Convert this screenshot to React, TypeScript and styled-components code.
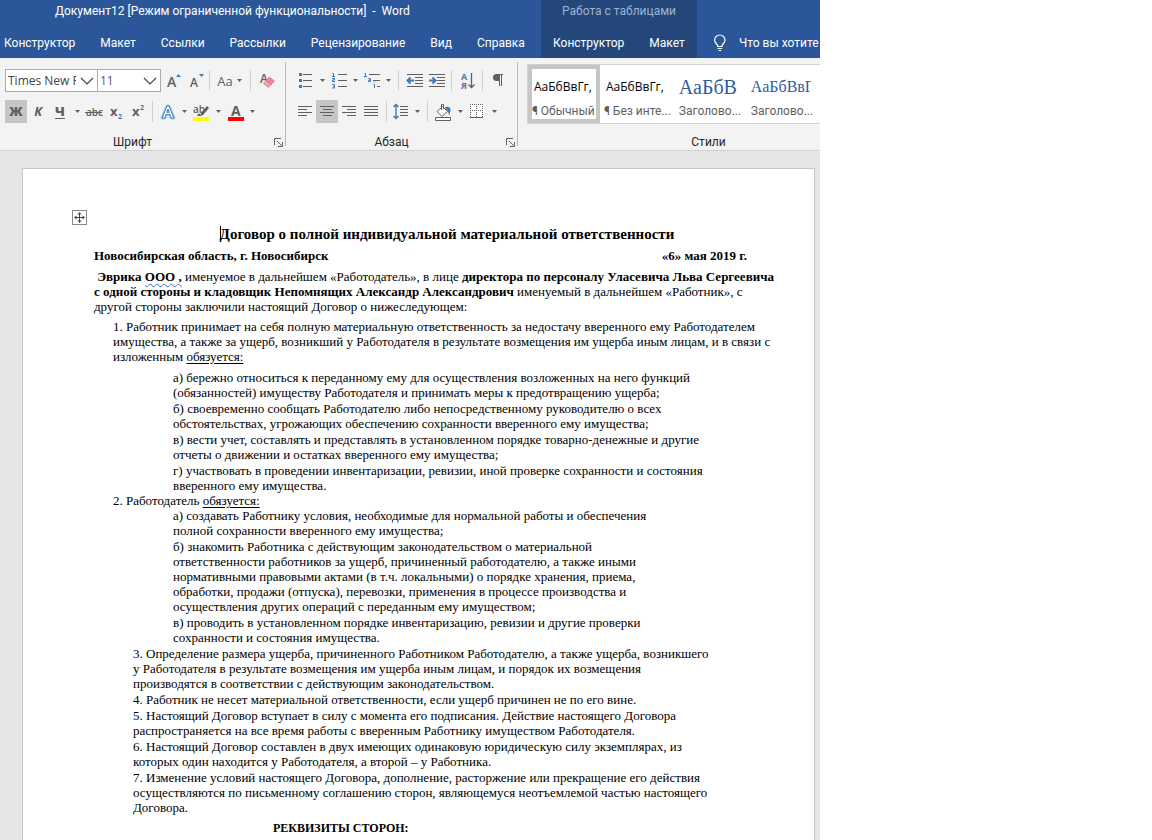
import React from 'react';
import styled, { createGlobalStyle, css } from 'styled-components';

const UI = 'Roboto, "Noto Sans", sans-serif';
const HUMANIST = '"Open Sans", "Noto Sans", sans-serif';
const SERIF = '"Liberation Serif", serif';
const GRAY = '#5f5f5f';
const BLUE = '#3e7ab5';

const GlobalStyle = createGlobalStyle`
  *, *::before, *::after { box-sizing: border-box; }
  html, body, #root { height: 100%; }
  body { margin: 0; background: #fff; overflow: hidden; }
  button, select { font: inherit; color: inherit; margin: 0; border: 0; background: none; }
  svg { overflow: visible; flex: none; }
`;

const AppWindow = styled.div`
  display: flex;
  flex-direction: column;
  width: 100%;
  max-width: 820px;
  height: 100vh;
  overflow: hidden;
  font-family: ${UI};
  font-size: 12px;
`;

/* ---------- title bar and tabs ---------- */

const Header = styled.header`
  display: grid;
  grid-template-columns: 541px 156px minmax(0, 1fr);
  background: #2b579a;
  color: #fff;
  height: 58px;
`;

const HeaderPart = styled.div<{ $context?: boolean }>`
  display: grid;
  grid-template-rows: 28px 30px;
  min-width: 0;
  overflow: hidden;
  background: ${(p) => (p.$context ? '#24477b' : 'transparent')};
`;

const WindowTitle = styled.h1`
  margin: 0;
  padding: 2px 0 0 55px;
  font-size: 12px;
  font-weight: 400;
  line-height: 18px;
  white-space: pre;
`;

const ContextTitle = styled.div`
  padding-top: 2px;
  line-height: 18px;
  text-align: center;
  color: #9fb3d1;
`;

const TabBar = styled.nav<{ $inset?: number }>`
  display: flex;
  gap: 25px;
  padding-left: ${(p) => p.$inset ?? 4}px;
`;

const Tab = styled.button`
  padding: 0;
  height: 30px;
  line-height: 30px;
  white-space: nowrap;
  cursor: pointer;
`;

const TellMe = styled.button`
  grid-row: 2;
  display: flex;
  align-items: center;
  gap: 12px;
  padding: 0 0 0 16px;
  white-space: nowrap;
  cursor: pointer;
`;

/* ---------- ribbon ---------- */

const Ribbon = styled.div`
  display: flex;
  height: 93px;
  flex: none;
  background: #f3f3f3;
  border-bottom: 1px solid #d2d2d2;
  color: ${GRAY};
`;

const Group = styled.section<{ $width?: number }>`
  position: relative;
  display: flex;
  flex-direction: column;
  ${(p) => (p.$width ? css`flex: 0 0 ${p.$width}px;` : css`flex: 1; min-width: 0;`)}

  &:not(:last-child)::after {
    content: '';
    position: absolute;
    right: 0;
    top: 4px;
    bottom: 4px;
    width: 1px;
    background: #b5b5b5;
  }
`;

const ToolRow = styled.div<{ $inset: number }>`
  display: flex;
  align-items: center;
  height: 31px;
  padding-left: ${(p) => p.$inset}px;
`;

const Tools = styled.div`
  padding-top: 7px;
  height: 76px;
`;

const GroupFooter = styled.footer<{ $inset?: number }>`
  display: flex;
  align-items: center;
  gap: 9px;
  height: 16px;
  padding: 0 3px 0 ${(p) => p.$inset ?? 0}px;
  color: #262626;
`;

const GroupName = styled.h2`
  flex: 1;
  margin: 0;
  font-size: 12px;
  font-weight: 400;
  line-height: 16px;
  text-align: center;
`;

const Tool = styled.button<{ $width?: number; $active?: boolean }>`
  display: flex;
  align-items: center;
  justify-content: center;
  flex: none;
  width: ${(p) => p.$width ?? 22}px;
  height: 23px;
  padding: 0;
  background: ${(p) => (p.$active ? '#c6c6c6' : 'transparent')};
  cursor: pointer;
`;

const Separator = styled.span<{ $gap?: number }>`
  flex: none;
  width: 1px;
  height: 21px;
  margin: 0 ${(p) => p.$gap ?? 3}px;
  background: #d0d0d0;
`;

const ComboBox = styled.label<{ $width: number }>`
  position: relative;
  display: block;
  width: ${(p) => p.$width}px;
  height: 23px;
  background: #fff;
  border: 1px solid #ababab;
  font-family: ${HUMANIST};

  & + & { margin-left: -1px; }

  svg { position: absolute; right: 3px; top: 7px; pointer-events: none; }
`;

const ComboSelect = styled.select<{ $color: string }>`
  appearance: none;
  width: 100%;
  height: 21px;
  padding: 0 21px 0 2px;
  line-height: 19px;
  overflow: hidden;
  text-overflow: clip;
  color: ${(p) => p.$color};
  outline: 0;
`;

const Glyph = styled.span<{ $italic?: boolean; $underline?: boolean }>`
  font-family: ${HUMANIST};
  font-size: 13px;
  font-weight: ${(p) => (p.$italic ? 700 : 800)};
  line-height: 13px;
  font-style: ${(p) => (p.$italic ? 'italic' : 'normal')};
  border-bottom: ${(p) => (p.$underline ? `1px solid ${GRAY}` : '0')};
`;

const CaseGlyph = styled.span`
  font-family: ${HUMANIST};
  font-size: 13px;
  margin-right: 4px;
`;

/* ---------- style gallery ---------- */

const GalleryArea = styled.div`
  height: 76px;
  padding: 6px 0 0 9px;
`;

const Gallery = styled.div`
  display: flex;
  height: 60px;
  background: #fff;
  border: 1px solid #d2d2d2;
  border-right: 0;
  overflow: hidden;
`;

const StyleCard = styled.button<{ $active?: boolean }>`
  display: flex;
  flex-direction: column;
  flex: 0 0 72px;
  height: 58px;
  padding: 10px 4px 0;
  box-shadow: ${(p) => (p.$active ? 'inset 0 0 0 4px #c6c6c6' : 'none')};
  text-align: left;
  cursor: pointer;
`;

const Sample = styled.span<{ $size?: number }>`
  width: 60px;
  height: 24px;
  overflow: hidden;
  white-space: nowrap;
  line-height: 24px;
  ${(p) =>
    p.$size
      ? css`font-family: ${SERIF}; font-size: ${p.$size}px; color: #2f5f9b;`
      : css`margin-left: 2px; font-family: ${HUMANIST}; font-size: 12px; color: #000;`}
`;

const StyleName = styled.span`
  line-height: 24px;
  white-space: nowrap;
  color: ${GRAY};
`;

/* ---------- document ---------- */

const Workspace = styled.main`
  display: flex;
  flex: 1;
  min-height: 0;
  padding: 17px 5px 0 22px;
  background: #e6e6e6;
  overflow: hidden;
`;

const Page = styled.article`
  position: relative;
  flex: 1;
  padding: 57px 14px 0 71px;
  background: #fff;
  border: 1px solid #c6c6c6;
  border-bottom: 0;
  font-family: ${SERIF};
  font-size: 13px;
  line-height: 15px;
  color: #000;
  white-space: nowrap;
`;

const TableHandle = styled.button`
  position: absolute;
  left: 49px;
  top: 41px;
  width: 15px;
  height: 15px;
  padding: 0;
  border: 1px solid #8a8a8a;
  background: #fff;

  svg { display: block; }
`;

const DocTitle = styled.h2`
  margin: 0 0 5px;
  font-size: 15px;
  line-height: 17px;
  text-align: center;
`;

const TextCursor = styled.span`
  display: inline-block;
  width: 1px;
  height: 16px;
  margin-right: -1px;
  background: #000;
  vertical-align: -3px;
`;

const PlaceAndDate = styled.div`
  display: flex;
  justify-content: space-between;
  margin-bottom: 6px;
  padding-right: 53px;
  font-weight: 700;
`;

const Paragraph = styled.p<{ $indent?: number; $after?: number }>`
  margin: 0 0 ${(p) => p.$after ?? 0}px;
  padding-left: ${(p) => p.$indent ?? 0}px;
`;

const Clauses = styled.div<{ $indent: number; $after?: number }>`
  display: flex;
  flex-direction: column;
  gap: 1px;
  padding-left: ${(p) => p.$indent}px;
  margin-bottom: ${(p) => p.$after ?? 0}px;
`;

const Flagged = styled.span`
  text-decoration: underline wavy #3b6fd8 1px;
  text-underline-offset: 2px;
`;

const Underlined = styled.u`
  text-underline-offset: 2px;
`;

const Requisites = styled.h3`
  margin: 0;
  padding-left: 179px;
  font-size: 12px;
`;

/* ---------- icons ---------- */

const Caret = () => (
  <svg width="5" height="3" viewBox="0 0 5 3"><path d="M0 0h5L2.500 3z" fill={GRAY} /></svg>
);

const Chevron = () => (
  <svg width="14" height="8" viewBox="0 0 14 8"><path d="M1 1l6 6 6-6" fill="none" stroke="#444" strokeWidth="1.2" /></svg>
);

const CaretTool = ({ label, width = 12 }: { label: string; width?: number }) => (
  <Tool $width={width} aria-label={label}><Caret /></Tool>
);

const Lines = ({ rows }: { rows: [number, number][] }) => (
  <svg width="15" height="13" viewBox="0 0 15 13" stroke={GRAY}>
    {rows.map(([x, w], i) => (
      <path key={i} d={`M${x} ${i * 3 + 1.5}h${w}`} />
    ))}
  </svg>
);

const Bulb = () => (
  <svg width="14" height="18" viewBox="0 0 14 18" fill="none" stroke="#fff" strokeWidth="1.2">
    <path d="M4.500 12.500V11C3 9.700 1.600 8.500 1.600 6.200A5.200 5.200 0 0 1 12 6.200c0 2.300-1.400 3.500-2.900 4.800v1.500zM4.500 14.500h4.600M5.500 16.500h2.600" />
  </svg>
);

const FontSizeIcon = ({ up }: { up?: boolean }) => (
  <svg width="16" height="18" viewBox="0 0 16 18">
    <text x="2" y="15" fontFamily={HUMANIST} fontSize={up ? 14 : 12} fontWeight="600" fill={GRAY}>A</text>
    <path d={up ? 'M11 5l2.500-3L16 5z' : 'M11 2h5l-2.500 3z'} fill={BLUE} />
  </svg>
);

const EraserIcon = () => (
  <svg width="16" height="18" viewBox="0 0 16 18">
    <text x="1" y="11" fontFamily={HUMANIST} fontSize="12" fontWeight="600" fill={GRAY}>A</text>
    <path d="M10.500 4.500L16 9l-6.500 7L4 11.500z" fill="#e8879a" />
    <path d="M5.700 9.800l5.400 4.500" stroke="#f9dfe4" />
  </svg>
);

const StrikeIcon = () => (
  <svg width="18" height="14" viewBox="0 0 18 14">
    <text x="1" y="11" fontFamily={HUMANIST} fontSize="10" fontWeight="600" fill={GRAY}>abc</text>
    <path d="M0 7.500h17" stroke={GRAY} />
  </svg>
);

const ScriptIcon = ({ sup }: { sup?: boolean }) => (
  <svg width="14" height="18" viewBox="0 0 14 18">
    <text x="1" y="13" fontFamily={HUMANIST} fontSize="13" fontWeight="700" fill={GRAY}>x</text>
    <text x="9" y={sup ? 7 : 16} fontFamily={HUMANIST} fontSize="7" fontWeight="700" fill={BLUE}>2</text>
  </svg>
);

const EffectIcon = () => (
  <svg width="14" height="18" viewBox="1 0 14 18">
    <path d="M3 15L8 3h2l5 12h-2.800l-1.200-3.500H7L5.800 15zM7.800 9.300h2.400L9 6z" fill="#fff" stroke="#a9cbeb" strokeWidth="3" strokeLinejoin="round" />
    <path d="M3 15L8 3h2l5 12h-2.800l-1.200-3.500H7L5.800 15zM7.800 9.300h2.400L9 6z" fill="#fff" stroke={BLUE} />
  </svg>
);

const HighlightIcon = () => (
  <svg width="18" height="18" viewBox="0 0 18 18">
    <text x="1" y="10" fontFamily={HUMANIST} fontSize="10" fontWeight="600" fill={GRAY}>ab</text>
    <path d="M15 3l2 2-6 7-3 1 1-3z" fill={GRAY} />
    <path d="M7 10l2 3H5z" fill={GRAY} />
    <path d="M1 14h16v4H1z" fill="#ff0" />
  </svg>
);

const FontColorIcon = () => (
  <svg width="18" height="18" viewBox="0 0 18 18">
    <text x="5" y="13" fontFamily={HUMANIST} fontSize="14" fontWeight="700" fill={GRAY}>A</text>
    <path d="M2 14h16v4H2z" fill="#f00" />
  </svg>
);

const BulletsIcon = () => (
  <svg width="15" height="17" viewBox="0 0 15 17">
    <path d="M5 2.500h9M5 8.500h9M5 14.500h9" stroke={GRAY} />
    <path d="M1 1h3v3H1zM1 7h3v3H1zM1 13h3v3H1z" fill={BLUE} />
  </svg>
);

const NumberingIcon = () => (
  <svg width="15" height="17" viewBox="0 0 15 17">
    <path d="M6 2.500h9M6 8.500h9M6 14.500h9" stroke={GRAY} />
    <path d="M.5 1.500h1V4M0 4.500h3M0 6.500h2.500v1.500H.5v1.500H3M0 12.500h2.500v3.500H0M1 14.300h1.500" fill="none" stroke={BLUE} />
  </svg>
);

const MultilevelIcon = () => (
  <svg width="17" height="17" viewBox="0 0 17 17">
    <path d="M5 2.500h11M9 8.500h7M13 14.500h3" stroke={GRAY} />
    <path d="M.5 1.500h1V4M0 4.500h3M4.500 6.500h2V9.500h-2V8H6M9.500 12.500h1V16M9.500 10h1" fill="none" stroke={BLUE} />
  </svg>
);

const IndentIcon = ({ out }: { out?: boolean }) => (
  <svg width="17" height="15" viewBox="0 0 17 15">
    <path d="M1 1.500h16M9 4.500h8M9 7.500h8M9 10.500h8M1 13.500h16" stroke={GRAY} />
    <path d={out ? 'M8 7.500H2M4.500 4.500l-3 3 3 3' : 'M1 7.500h6M4.500 4.500l3 3-3 3'} fill="none" stroke={BLUE} strokeWidth="2" />
  </svg>
);

const SortIcon = () => (
  <svg width="15" height="20" viewBox="0 0 15 20">
    <text x="1" y="9" fontFamily={HUMANIST} fontSize="9" fontWeight="700" fill={BLUE}>А</text>
    <text x="1" y="18" fontFamily={HUMANIST} fontSize="9" fontWeight="700" fill="#8a54ad">Я</text>
    <path d="M11.500 2v14M8.500 13.500l3 3 3-3" fill="none" stroke={GRAY} strokeWidth="1.300" />
  </svg>
);

const PilcrowIcon = () => (
  <svg width="12" height="15" viewBox="0 0 12 15">
    <path d="M6 1.500h5M7.500 1v12M9.500 1v12" stroke={GRAY} fill="none" />
    <path d="M7 1v7H4.500a3.500 3.500 0 0 1 0-7z" fill={GRAY} />
  </svg>
);

const SpacingIcon = () => (
  <svg width="16" height="17" viewBox="0 0 16 17">
    <path d="M7 3.500h8M7 6.500h8M7 9.500h8M7 12.500h8" stroke={GRAY} />
    <path d="M3 1.500v14M.5 4L3 1.500 5.500 4M.5 13L3 15.500 5.500 13" fill="none" stroke={BLUE} strokeWidth="1.400" />
  </svg>
);

const BucketIcon = () => (
  <svg width="18" height="18" viewBox="0 0 18 18">
    <path d="M11 4c4-1 6 1 5.500 4L15 12.500c-.5-3-1-4.500-3.500-7z" fill={BLUE} />
    <path d="M3 8.500l5.500-5 5 5-5.500 5z" fill="#fff" stroke={GRAY} />
    <path d="M7.500 7V1.500h2V6" fill="none" stroke={GRAY} />
    <path d="M1.500 14.500h15v3h-15z" fill="#fff" stroke={GRAY} />
  </svg>
);

const BordersIcon = () => (
  <svg width="14" height="15" viewBox="0 0 14 15">
    <path d="M0 0h14v14H0z" fill="#fff" />
    <path d="M0 .5h13M0 6.500h13M.5 0v13M6.500 0v13M12.500 0v13" stroke={GRAY} strokeDasharray="1 1" />
    <path d="M0 13.500h13" stroke={GRAY} />
  </svg>
);

const LauncherIcon = () => (
  <svg width="9" height="9" viewBox="0 0 9 9" fill="none" stroke={GRAY}>
    <path d="M.5 7V.5H7M3 3l4.500 4.500M8.500 4v4.500H4" />
  </svg>
);

const MoveIcon = () => (
  <svg width="13" height="13" viewBox="0 0 13 13">
    <path d="M6.500 2v9M2 6.500h9" stroke="#444" />
    <path d="M4.500 3.500h4l-2-2.500zM4.500 9.500h4l-2 2.500zM3.500 4.500v4L1 6.500zM9.500 4.500v4l2.500-2z" fill="#444" />
  </svg>
);

/* ---------- content ---------- */

const TABS = ['Конструктор', 'Макет', 'Ссылки', 'Рассылки', 'Рецензирование', 'Вид', 'Справка'];

const EMPLOYEE_DUTIES = [
  ['а) бережно относиться к переданному ему для осуществления возложенных на него функций', '(обязанностей) имуществу Работодателя и принимать меры к предотвращению ущерба;'],
  ['б) своевременно сообщать Работодателю либо непосредственному руководителю о всех', 'обстоятельствах, угрожающих обеспечению сохранности вверенного ему имущества;'],
  ['в) вести учет, составлять и представлять в установленном порядке товарно-денежные и другие', 'отчеты о движении и остатках вверенного ему имущества;'],
  ['г) участвовать в проведении инвентаризации, ревизии, иной проверке сохранности и состояния', 'вверенного ему имущества.'],
];

const EMPLOYER_DUTIES = [
  ['а) создавать Работнику условия, необходимые для нормальной работы и обеспечения', 'полной сохранности вверенного ему имущества;'],
  ['б) знакомить Работника с действующим законодательством о материальной', 'ответственности работников за ущерб, причиненный работодателю, а также иными', 'нормативными правовыми актами (в т.ч. локальными) о порядке хранения, приема,', 'обработки, продажи (отпуска), перевозки, применения в процессе производства и', 'осуществления других операций с переданным ему имуществом;'],
  ['в) проводить в установленном порядке инвентаризацию, ревизии и другие проверки', 'сохранности и состояния имущества.'],
];

const TERMS = [
  ['3. Определение размера ущерба, причиненного Работником Работодателю, а также ущерба, возникшего', 'у Работодателя в результате возмещения им ущерба иным лицам, и порядок их возмещения', 'производятся в соответствии с действующим законодательством.'],
  ['4. Работник не несет материальной ответственности, если ущерб причинен не по его вине.'],
  ['5. Настоящий Договор вступает в силу с момента его подписания. Действие настоящего Договора', 'распространяется на все время работы с вверенным Работнику имуществом Работодателя.'],
  ['6. Настоящий Договор составлен в двух имеющих одинаковую юридическую силу экземплярах, из', 'которых один находится у Работодателя, а второй – у Работника.'],
  ['7. Изменение условий настоящего Договора, дополнение, расторжение или прекращение его действия', 'осуществляются по письменному соглашению сторон, являющемуся неотъемлемой частью настоящего', 'Договора.'],
];

const ClauseList = ({ items, indent, after }: { items: string[][]; indent: number; after?: number }) => (
  <Clauses $indent={indent} $after={after}>
    {items.map((lines) => (
      <Paragraph key={lines[0]}>
        {lines.map((line, i) => (
          <React.Fragment key={line}>
            {i > 0 && <br />}
            {line}
          </React.Fragment>
        ))}
      </Paragraph>
    ))}
  </Clauses>
);

const FontGroup = () => (
  <Group $width={286}>
    <Tools>
      <ToolRow $inset={5}>
        <ComboBox $width={93}>
          <ComboSelect $color="#444" aria-label="Шрифт"><option>Times New Roman</option></ComboSelect>
          <Chevron />
        </ComboBox>
        <ComboBox $width={64}>
          <ComboSelect $color="#6b4a80" aria-label="Размер шрифта"><option>11</option></ComboSelect>
          <Chevron />
        </ComboBox>
        <Tool $width={24} aria-label="Увеличить размер шрифта"><FontSizeIcon up /></Tool>
        <Tool aria-label="Уменьшить размер шрифта"><FontSizeIcon /></Tool>
        <Separator $gap={2} />
        <Tool $width={35} aria-label="Регистр"><CaseGlyph>Aa</CaseGlyph><Caret /></Tool>
        <Separator />
        <Tool $width={26} aria-label="Очистить формат"><EraserIcon /></Tool>
      </ToolRow>
      <ToolRow $inset={5}>
        <Tool $active aria-label="Полужирный"><Glyph>Ж</Glyph></Tool>
        <Tool aria-label="Курсив"><Glyph $italic>К</Glyph></Tool>
        <Tool aria-label="Подчеркнутый"><Glyph $underline>Ч</Glyph></Tool>
        <CaretTool label="Вид подчеркивания" />
        <Tool aria-label="Зачеркнутый"><StrikeIcon /></Tool>
        <Tool aria-label="Подстрочный знак"><ScriptIcon /></Tool>
        <Tool aria-label="Надстрочный знак"><ScriptIcon sup /></Tool>
        <Separator />
        <Tool aria-label="Текстовые эффекты"><EffectIcon /></Tool>
        <CaretTool label="Выбор эффекта" />
        <Tool aria-label="Цвет выделения"><HighlightIcon /></Tool>
        <CaretTool label="Выбор цвета выделения" />
        <Tool aria-label="Цвет шрифта"><FontColorIcon /></Tool>
        <CaretTool label="Выбор цвета шрифта" />
      </ToolRow>
    </Tools>
    <GroupFooter>
      <GroupName>Шрифт</GroupName>
      <Tool $width={9} aria-label="Параметры шрифта"><LauncherIcon /></Tool>
    </GroupFooter>
  </Group>
);

const ParagraphGroup = () => (
  <Group $width={232}>
    <Tools>
      <ToolRow $inset={8}>
        <Tool aria-label="Маркеры"><BulletsIcon /></Tool>
        <CaretTool label="Вид маркеров" />
        <Tool aria-label="Нумерация"><NumberingIcon /></Tool>
        <CaretTool label="Вид нумерации" width={11} />
        <Tool aria-label="Многоуровневый список"><MultilevelIcon /></Tool>
        <CaretTool label="Вид списка" width={11} />
        <Separator $gap={4} />
        <Tool aria-label="Уменьшить отступ"><IndentIcon out /></Tool>
        <Tool aria-label="Увеличить отступ"><IndentIcon /></Tool>
        <Separator $gap={4} />
        <Tool aria-label="Сортировка"><SortIcon /></Tool>
        <Separator $gap={4} />
        <Tool aria-label="Отобразить все знаки"><PilcrowIcon /></Tool>
      </ToolRow>
      <ToolRow $inset={8}>
        <Tool aria-label="По левому краю"><Lines rows={[[0, 14], [0, 9], [0, 14], [0, 9]]} /></Tool>
        <Tool $active aria-label="По центру"><Lines rows={[[0, 14], [3, 9], [0, 14], [3, 9]]} /></Tool>
        <Tool aria-label="По правому краю"><Lines rows={[[0, 14], [5, 9], [0, 14], [5, 9]]} /></Tool>
        <Tool aria-label="По ширине"><Lines rows={[[0, 14], [0, 14], [0, 14], [0, 14]]} /></Tool>
        <Separator $gap={4} />
        <Tool $width={20} aria-label="Интервал"><SpacingIcon /></Tool>
        <CaretTool label="Выбор интервала" />
        <Separator $gap={4} />
        <Tool aria-label="Заливка"><BucketIcon /></Tool>
        <CaretTool label="Цвет заливки" />
        <Tool aria-label="Границы"><BordersIcon /></Tool>
        <CaretTool label="Вид границ" />
      </ToolRow>
    </Tools>
    <GroupFooter>
      <GroupName>Абзац</GroupName>
      <Tool $width={9} aria-label="Параметры абзаца"><LauncherIcon /></Tool>
    </GroupFooter>
  </Group>
);

const StylesGroup = () => (
  <Group>
    <GalleryArea>
      <Gallery>
        <StyleCard $active><Sample>АаБбВвГг,</Sample><StyleName>¶ Обычный</StyleName></StyleCard>
        <StyleCard><Sample>АаБбВвГг,</Sample><StyleName>¶ Без инте...</StyleName></StyleCard>
        <StyleCard><Sample $size={20}>АаБбВ</Sample><StyleName>Заголово...</StyleName></StyleCard>
        <StyleCard><Sample $size={16}>АаБбВвГ</Sample><StyleName>Заголово...</StyleName></StyleCard>
      </Gallery>
    </GalleryArea>
    <GroupFooter $inset={82}>
      <GroupName>Стили</GroupName>
    </GroupFooter>
  </Group>
);

export default function App() {
  return (
    <>
      <GlobalStyle />
      <AppWindow>
        <Header>
          <HeaderPart>
            <WindowTitle>{'Документ12 [Режим ограниченной функциональности]  -  Word'}</WindowTitle>
            <TabBar>{TABS.map((tab) => <Tab key={tab}>{tab}</Tab>)}</TabBar>
          </HeaderPart>
          <HeaderPart $context>
            <ContextTitle>Работа с таблицами</ContextTitle>
            <TabBar $inset={12}>
              <Tab>Конструктор</Tab>
              <Tab>Макет</Tab>
            </TabBar>
          </HeaderPart>
          <HeaderPart>
            <TellMe><Bulb />Что вы хотите сделать?</TellMe>
          </HeaderPart>
        </Header>

        <Ribbon>
          <FontGroup />
          <ParagraphGroup />
          <StylesGroup />
        </Ribbon>

        <Workspace>
          <Page>
            <TableHandle aria-label="Переместить таблицу"><MoveIcon /></TableHandle>
            <DocTitle><TextCursor />Договор о полной индивидуальной материальной ответственности</DocTitle>
            <PlaceAndDate>
              <span>Новосибирская область, г. Новосибирск</span>
              <span>«6» мая 2019 г.</span>
            </PlaceAndDate>
            <Paragraph $after={5}>
              <b>&nbsp;Эврика <Flagged>ООО ,</Flagged></b> именуемое в дальнейшем «Работодатель», в лице <b>директора по персоналу Уласевича Льва Сергеевича</b>
              <br />
              <b>с одной стороны и кладовщик Непомнящих Александр Александрович</b> именуемый в дальнейшем «Работник», с
              <br />
              другой стороны заключили настоящий Договор о нижеследующем:
            </Paragraph>
            <Paragraph $indent={19} $after={6}>
              1. Работник принимает на себя полную материальную ответственность за недостачу вверенного ему Работодателем
              <br />
              имущества, а также за ущерб, возникший у Работодателя в результате возмещения им ущерба иным лицам, и в связи с
              <br />
              изложенным <Underlined>обязуется:</Underlined>
            </Paragraph>
            <ClauseList items={EMPLOYEE_DUTIES} indent={79} />
            <Paragraph $indent={19}>2. Работодатель <Underlined>обязуется:</Underlined></Paragraph>
            <ClauseList items={EMPLOYER_DUTIES} indent={79} after={1} />
            <ClauseList items={TERMS} indent={39} after={6} />
            <Requisites>РЕКВИЗИТЫ СТОРОН:</Requisites>
          </Page>
        </Workspace>
      </AppWindow>
    </>
  );
}
